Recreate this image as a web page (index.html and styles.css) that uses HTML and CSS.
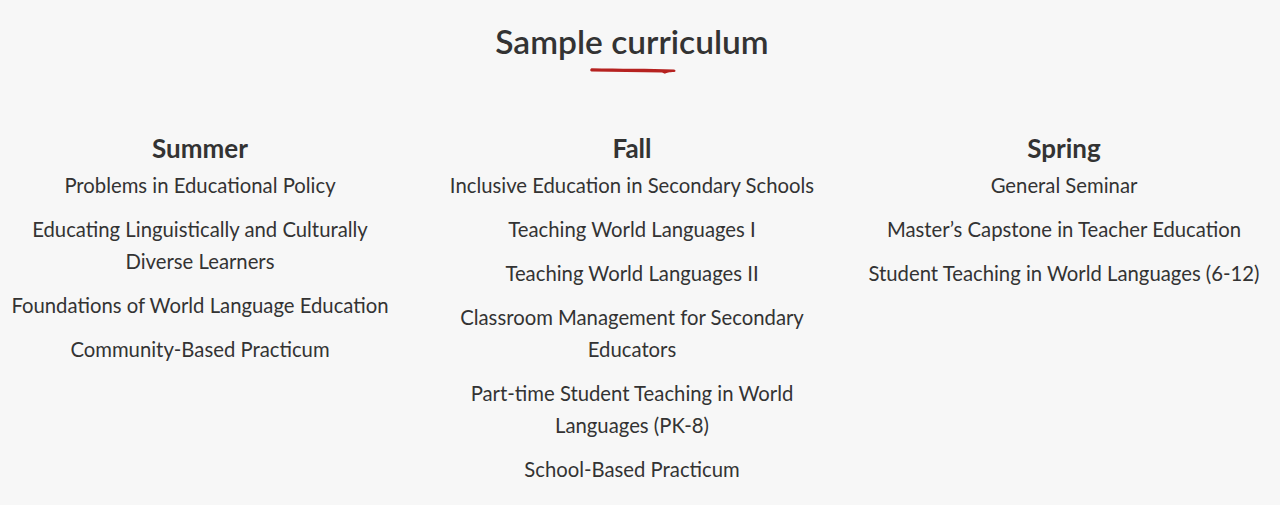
FILE: index.html
```html
<!DOCTYPE html>
<html lang="en">
<head>
<meta charset="utf-8">
<title>Sample curriculum</title>
<link rel="stylesheet" href="styles.css">
</head>
<body>
<section class="curriculum">
  <h2 class="title">Sample curriculum</h2>
  <svg class="underline" width="88" height="10" viewBox="0 0 88 10" aria-hidden="true">
    <path d="M2.5 2.2 C 30 2.8, 60 2.4, 85 3.4 C 87 3.6, 87 5.8, 85 6.1 C 80 6.3, 78 6.5, 76 7.8 L 73 6.6 C 50 6.2, 25 6, 2.5 5.6 C 0.8 5.2, 0.8 2.6, 2.5 2.2 Z" fill="#b62220"/>
  </svg>
  <div class="columns">
    <div class="col">
      <h3 class="term">Summer</h3>
      <ul class="courses">
        <li>Problems in Educational Policy</li>
        <li>Educating Linguistically and Culturally Diverse Learners</li>
        <li>Foundations of World Language Education</li>
        <li>Community-Based Practicum</li>
      </ul>
    </div>
    <div class="col">
      <h3 class="term">Fall</h3>
      <ul class="courses">
        <li>Inclusive Education in Secondary Schools</li>
        <li>Teaching World Languages I</li>
        <li>Teaching World Languages II</li>
        <li>Classroom Management for Secondary Educators</li>
        <li>Part-time Student Teaching in World Languages (PK-8)</li>
        <li>School-Based Practicum</li>
      </ul>
    </div>
    <div class="col">
      <h3 class="term">Spring</h3>
      <ul class="courses">
        <li>General Seminar</li>
        <li>Master’s Capstone in Teacher Education</li>
        <li>Student Teaching in World Languages (6-12)</li>
      </ul>
    </div>
  </div>
</section>
</body>
</html>
```
FILE: styles.css
```css
html, body {
  margin: 0;
  padding: 0;
  background: #f7f7f7;
}
body {
  font-family: "Lato", "Liberation Sans", sans-serif;
  color: #333333;
}
.curriculum {
  width: 1264px;
  display: flex;
  flex-direction: column;
  align-items: center;
  padding-top: 21px;
}
.title {
  margin: 0;
  font-size: 33.5px;
  font-weight: 600;
  line-height: 40px;
}
.underline {
  display: block;
  margin-top: 5px;
  margin-left: 1px;
}
.columns {
  width: 100%;
  display: grid;
  grid-template-columns: repeat(3, 400px);
  column-gap: 32px;
  margin-top: 56px;
}
.col {
  text-align: center;
}
.term {
  margin: 0;
  font-size: 26px;
  font-weight: 700;
  line-height: 32px;
}
.courses {
  list-style: none;
  margin: 5px 0 0;
  padding: 0;
  display: flex;
  flex-direction: column;
  gap: 12px;
}
.courses li {
  font-size: 20.3px;
  line-height: 32px;
}
```
